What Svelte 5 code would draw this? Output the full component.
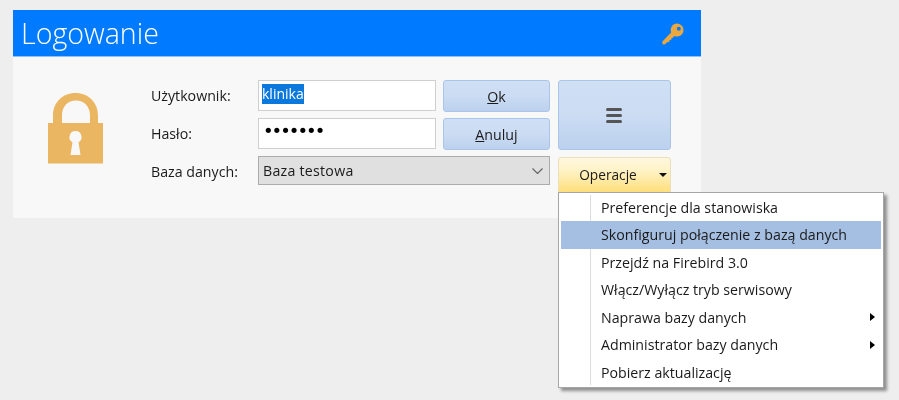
<script>
  const items = [
    { label: 'Preferencje dla stanowiska' },
    { label: 'Skonfiguruj połączenie z bazą danych', active: true },
    { label: 'Przejdź na Firebird 3.0' },
    { label: 'Włącz/Wyłącz tryb serwisowy' },
    { label: 'Naprawa bazy danych', sub: true },
    { label: 'Administrator bazy danych', sub: true },
    { label: 'Pobierz aktualizację' }
  ];
</script>

<div class="page">
  <section class="panel">
    <header class="head">
      <h1>Logowanie</h1>
      <svg class="key" width="24" height="24" viewBox="0 0 24 24" aria-hidden="true">
        <path fill="#eba83f" fill-rule="evenodd" d="M16 1.5a6.5 6.5 0 0 1 1.6 12.8c-1.500.4-3 .2-4.300-.4L11.500 16l-1 .2-.3 1.600-1.700.4-.4 1.700-2 .4L4 22.300 2 22.500l-.8-1.200.2-1.800 8.800-9A6.500 6.500 0 0 1 16 1.500zm1.800 3.200a2 2 0 1 0 0 4 2 2 0 0 0 0-4z"/>
      </svg>
    </header>
    <div class="form">
      <svg class="lock" width="55" height="71" viewBox="0 0 55 71" aria-hidden="true">
        <path fill="#ebb661" fill-rule="evenodd" d="M5 30V22.500C5 9.500 14.500 0 27.500 0S50 9.500 50 22.500V30h5v40.500H0V30zM14 30h28V22C42 13.500 36 7.500 28 7.500S14 13.500 14 22zM27.500 38a6 6 0 0 0-3 11.200L22.500 62h10l-2-12.800A6 6 0 0 0 27.500 38z"/>
      </svg>
      <label class="lab">Użytkownik:</label>
      <div class="field"><span class="sel">klinika</span></div>
      <button class="btn"><u>O</u>k</button>
      <button class="btn big" aria-label="Menu"><span class="bars"><i></i><i></i><i></i></span></button>

      <label class="lab">Hasło:</label>
      <div class="field dots">•••••••</div>
      <button class="btn"><u>A</u>nuluj</button>

      <label class="lab base">Baza danych:</label>
      <div class="select">
        <span>Baza testowa</span>
        <svg width="11" height="6" viewBox="0 0 11 6" aria-hidden="true"><path d="M.5.500l5 5 5-5" fill="none" stroke="#666" stroke-width="1.200"/></svg>
      </div>
      <div class="opwrap">
        <button class="ops"><span>Operacje</span><b class="caret"></b></button>
        <nav class="menu">
          {#each items as it}
            <div class="item" class:active={it.active}>
              <span>{it.label}</span>
              {#if it.sub}<b class="arrow"></b>{/if}
            </div>
          {/each}
        </nav>
      </div>
    </div>
  </section>
</div>

<style>
  :global(body) { margin: 0; background: #eeeeee; }
  .page {
    width: 899px;
    height: 400px;
    padding: 10px 0 0 13px;
    box-sizing: border-box;
    background: #eeeeee;
    font-family: "Open Sans", "Noto Sans", sans-serif;
    font-size: 14.200px;
    color: #1a1a1a;
    overflow: hidden;
    filter: blur(0.35px);
  }
  .panel { width: 688px; height: 208px; background: #f8f8f8; }
  .head {
    height: 46px;
    background: #007bff;
    border-bottom: 1px solid #8cc2fb;
    display: flex;
    align-items: center;
    justify-content: space-between;
    padding: 0 16px 0 8px;
  }
  h1 { margin: 0; font: 300 28.600px/1 "Open Sans", sans-serif; color: #ffffff; }
  .key { margin-top: 2px; }
  .form {
    position: relative;
    display: grid;
    grid-template-columns: 107px 178px 114px 121px;
    grid-template-rows: 32px 32px 36px;
    row-gap: 6px;
    padding: 23px 0 0 138px;
  }
  .lock { position: absolute; left: 35px; top: 36px; }
  .lab { align-self: center; margin-top: -1px; }
  .base { margin-top: -6px; }
  .field {
    width: 178px;
    height: 31px;
    box-sizing: border-box;
    background: #fff;
    border: 1px solid #cfcfcf;
    padding: 3px 3px;
    line-height: 20px;
    font-size: 14px;
  }
  .sel { display: inline-block; background: #0a78dc; color: #fff; height: 20px; }
  .dots { font-family: "DejaVu Sans", sans-serif; font-size: 18px; line-height: 20px; color: #000; letter-spacing: -2px; padding: 2px 0 0 4px; }
  .btn {
    font: inherit;
    color: #1a1a1a;
    margin-left: 7px;
    width: 107px;
    height: 32px;
    padding: 0;
    border: 1px solid #a9c5ea;
    border-radius: 3px;
    background: linear-gradient(#cfe0f5 0%, #cbdcf3 50%, #bcd1ee 100%);
  }
  .big {
    grid-column: 4;
    grid-row: 1 / span 2;
    margin-left: 8px;
    width: 113px;
    height: 70px;
    display: flex;
    align-items: center;
    justify-content: center;
  }
  .bars { display: flex; flex-direction: column; gap: 3px; width: 16px; margin-left: -1px; }
  .bars i { display: block; height: 3px; background: #555; border-radius: 1.500px; }
  .select {
    grid-column: 2 / span 2;
    width: 292px;
    height: 29px;
    box-sizing: border-box;
    background: #e0e0e0;
    border: 1px solid #acacac;
    display: flex;
    align-items: center;
    justify-content: space-between;
    padding: 0 6px 0 4px;
    letter-spacing: 0.250px;
  }
  .opwrap { position: relative; margin-left: 8px; margin-top: 1px; height: 35px; }
  .ops {
    font: inherit;
    font-size: 13.700px;
    color: #1a1a1a;
    width: 113px;
    height: 35px;
    padding: 0 0 2px;
    border: 1px solid #eadfb8;
    border-bottom: none;
    border-radius: 4px 4px 0 0;
    background: linear-gradient(#fff8df 0%, #fff3c8 35%, #fedf7c 100%);
    display: flex;
    align-items: center;
    position: relative;
    justify-content: center;
  }
  .ops span { margin-right: 13px; }
  .caret {
    position: absolute;
    right: 3px;
    top: 15px;
    border-left: 4px solid transparent;
    border-right: 4px solid transparent;
    border-top: 4px solid #111;
  }
  .menu {
    position: absolute;
    left: 0;
    top: 35px;
    width: 326px;
    height: 196px;
    box-sizing: border-box;
    background: #fff;
    border: 1px solid #a6a6a6;
    box-shadow: 3px 3px 3px #8f8f8f;
    padding: 0.500px 2px;
    z-index: 2;
  }
  .menu::before {
    content: "";
    position: absolute;
    left: 31px;
    top: 2px;
    bottom: 2px;
    width: 1px;
    background: #dcdcdc;
  }
  .item {
    position: relative;
    height: 27.500px;
    display: flex;
    align-items: center;
    justify-content: space-between;
    padding: 0 6px 0 40px;
    white-space: nowrap;
  }
  .active { background: #a5bfe3; }
  .arrow {
    border-top: 4px solid transparent;
    border-bottom: 4px solid transparent;
    border-left: 5px solid #000;
  }
</style>
